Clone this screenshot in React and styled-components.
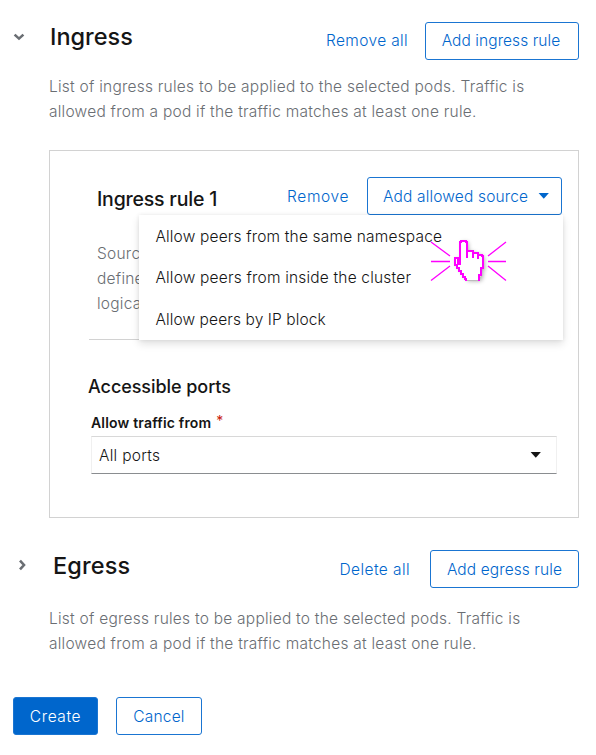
import React from "react";
import styled, { createGlobalStyle } from "styled-components";

const GlobalStyle = createGlobalStyle`
  *, *::before, *::after { box-sizing: border-box; }
  body {
    margin: 0;
    background: #fff;
    color: #151515;
    font-family: Inter, "Noto Sans", sans-serif;
    font-size: 15.5px;
    line-height: 25px;
    overflow: hidden;
  }
  h2, h3, h4, p { margin: 0; }
  button { font: inherit; cursor: pointer; }
`;

const Page = styled.main`
  width: 596px;
  height: 755px;
  display: flex;
  flex-direction: column;
  padding: 22px 17px 0 12px;
`;

const SectionHeader = styled.header`
  display: flex;
  align-items: center;
  height: 38px;
  margin-top: ${(p) => p.$top || 0}px;
`;

const Toggle = styled.button`
  display: flex;
  width: 14px;
  height: 14px;
  padding: 0;
  border: 0;
  background: none;
  margin: 0 ${(p) => p.$gap}px 9px ${(p) => p.$indent}px;
`;

const SectionTitle = styled.h2`
  font-size: 23.5px;
  font-weight: 460;
  line-height: 30px;
  letter-spacing: ${(p) => p.$track}px;
  margin-bottom: ${(p) => p.$lift}px;
  margin-right: auto;
`;

const LinkButton = styled.button`
  padding: 0 0 ${(p) => p.$lift || 0}px;
  border: 0;
  background: none;
  color: #06c;
  font-weight: 350;
  letter-spacing: ${(p) => p.$track}px;
  margin-right: ${(p) => p.$gap}px;
  white-space: nowrap;
`;

const Button = styled.button`
  display: flex;
  align-items: center;
  justify-content: center;
  flex: none;
  width: ${(p) => p.$width}px;
  height: 38px;
  padding: 0 ${(p) => p.$lift || 0}px ${(p) => p.$lift || 0}px 0;
  border: 1px solid #1a75d2;
  border-radius: 3px;
  background: ${(p) => (p.$primary ? "#06c" : "#fff")};
  color: ${(p) => (p.$primary ? "#fff" : "#06c")};
  font-weight: 350;
  letter-spacing: ${(p) => p.$track}px;
  white-space: nowrap;
`;

const MenuToggle = styled(Button)`
  justify-content: space-between;
  padding: 0 11px 0 15px;
`;

const Description = styled.p`
  margin: ${(p) => p.$top}px 0 0 37px;
  color: #6a6e73;
  font-weight: 350;
  letter-spacing: 0.24px;
  white-space: nowrap;
`;

const RuleCard = styled.section`
  width: 530px;
  height: 368px;
  margin: 26px 0 0 37px;
  border: 1px solid #d2d2d2;
  padding: 26px 16px 0 39px;
`;

const RuleHeader = styled.div`
  position: relative;
  display: flex;
  align-items: center;
  height: 38px;
`;

const RuleTitle = styled.h3`
  font-size: 19.5px;
  font-weight: 460;
  letter-spacing: -0.2px;
  margin: 7px auto 0 8px;
`;

const SourceMenu = styled.ul`
  position: absolute;
  top: 38px;
  right: -1px;
  z-index: 1;
  width: 424px;
  height: 125px;
  margin: 0;
  padding: 1px 0 0;
  list-style: none;
  background: #fff;
  box-shadow: 0 4px 8px rgba(3, 3, 3, 0.12), 0 0 4px rgba(3, 3, 3, 0.08);
`;

const MenuItem = styled.li`
  height: 41.4px;
  padding-left: 16.4px;
  line-height: 41px;
  font-weight: 350;
  letter-spacing: ${(p) => p.$track}px;
`;

const ClickPointer = styled.svg`
  position: absolute;
  left: 292px;
  top: 25px;
  overflow: visible;
`;

const SourceText = styled.div`
  width: 467px;
  height: 125px;
  padding: 26px 0 0 8px;
  border-bottom: 1px solid #d2d2d2;
  color: #6a6e73;
  font-weight: 350;
  letter-spacing: 0.24px;
`;

const PortsTitle = styled.h4`
  margin: 34px 0 0 -1px;
  font-size: 18px;
  font-weight: 450;
  letter-spacing: -0.06px;
`;

const FieldLabel = styled.label`
  display: flex;
  margin: 15px 0 0 2px;
  height: 22px;
  line-height: 18px;
  font-size: 14px;
  font-weight: 560;
  letter-spacing: 0.18px;
`;

const Required = styled.span`
  margin: -2px 0 0 5px;
  color: #c9190b;
  font-weight: 400;
  font-size: 14px;
`;

const Select = styled.div`
  display: flex;
  align-items: center;
  justify-content: space-between;
  width: 466px;
  height: 38px;
  margin-left: 2px;
  padding: 0 14px 0 7px;
  border: 1px solid #f0f0f0;
  border-top-color: #d8d8d8;
  border-bottom-color: #8a8d90;
  font-weight: 350;
  letter-spacing: 0.28px;
`;

const Actions = styled.footer`
  display: flex;
  gap: 18px;
  margin: 41px 0 0 1px;
`;

const Caret = ({ color }) => (
  <svg width="12" height="8" viewBox="0 0 12 8" fill={color}>
    <path d="M.6 1h10.3L5.8 6.8Z" />
  </svg>
);

const Chevron = ({ open }) => (
  <svg width="14" height="14" viewBox="0 0 14 14" fill="none" stroke="#6a6e73" strokeWidth="2.6">
    <path d={open ? "M2.6 4.6 7 8.6 11.4 4.6" : "M5 2.6 9 7 5 11.4"} />
  </svg>
);

const Pointer = () => (
  <ClickPointer width="76" height="42" viewBox="0 0 76 42" fill="none" stroke="#f0f">
    <path strokeWidth="1.3" d="M0 2 19 16M0 21.5H19M0 40.5 19 26M75 2 57 16M57 21.5H75M57 26 75 40.5" />
    <g style={{ filter: "drop-shadow(2px 1px 2px rgba(0,0,0,.35))" }}>
      <path
        fill="#fff"
        stroke="none"
        d="M29 1h6l1 10h6v2h5v2h4l1 13-2 2v5l-2 5H35V38L31 35V32L27 29V26L23 24V18h4l2 2Z"
      />
    </g>
    <path
      strokeWidth="2"
      d="M35 41V39H34V37H32V34H30V31H28V28H26V25H24V18H27V24H29V2H30V1H35V2H36V18M36 11H42V18M42 13H47V19M47 15H51V16H52V28H50V35H48V41"
    />
    <path stroke="#bbb" d="M36 40.5H47" />
  </ClickPointer>
);

export default function App() {
  return (
    <>
      <GlobalStyle />
      <Page>
        <SectionHeader>
          <Toggle $indent={0} $gap={24} aria-label="Collapse ingress"><Chevron open /></Toggle>
          <SectionTitle $track={0} $lift={8}>Ingress</SectionTitle>
          <LinkButton $track={0.35} $gap={17} $lift={2}>Remove all</LinkButton>
          <Button $width={154} $track={0.08} $lift={2}>Add ingress rule</Button>
        </SectionHeader>
        <Description $top={14}>
          List of ingress rules to be applied to the selected pods. Traffic is<br />
          allowed from a pod if the traffic matches at least one rule.
        </Description>

        <RuleCard>
          <RuleHeader>
            <RuleTitle>Ingress rule 1</RuleTitle>
            <LinkButton $track={0.6} $gap={18}>Remove</LinkButton>
            <MenuToggle $width={195} $track={0.16}>Add allowed source<Caret color="#06c" /></MenuToggle>
            <SourceMenu>
              <MenuItem $track={0.17}>Allow peers from the same namespace</MenuItem>
              <MenuItem $track={0.19}>Allow peers from inside the cluster</MenuItem>
              <MenuItem $track={0.11}>Allow peers by IP block</MenuItem>
              <Pointer />
            </SourceMenu>
          </RuleHeader>
          <SourceText>Sourc<br />define<br />logica</SourceText>
          <PortsTitle>Accessible ports</PortsTitle>
          <FieldLabel>Allow traffic from<Required>*</Required></FieldLabel>
          <Select>All ports<Caret color="#151515" /></Select>
        </RuleCard>

        <SectionHeader $top={32}>
          <Toggle $indent={3} $gap={24} aria-label="Expand egress"><Chevron /></Toggle>
          <SectionTitle $track={0.15} $lift={6}>Egress</SectionTitle>
          <LinkButton $track={0.42} $gap={20}>Delete all</LinkButton>
          <Button $width={149} $track={0.1}>Add egress rule</Button>
        </SectionHeader>
        <Description $top={18}>
          List of egress rules to be applied to the selected pods. Traffic is<br />
          allowed from a pod if the traffic matches at least one rule.
        </Description>

        <Actions>
          <Button $primary $width={85} $track={0.6}>Create</Button>
          <Button $width={86} $track={0.2}>Cancel</Button>
        </Actions>
      </Page>
    </>
  );
}
